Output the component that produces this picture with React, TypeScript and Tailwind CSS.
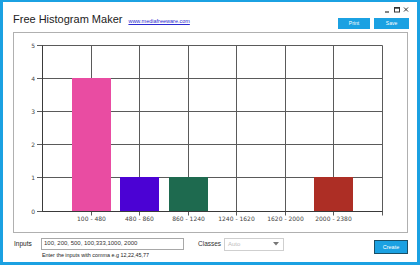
import React from 'react';

const bars = [
  { label: '100 - 480', value: 4, color: '#e94ca2' },
  { label: '480 - 860', value: 1, color: '#4b02d4' },
  { label: '860 - 1240', value: 1, color: '#1e6a4f' },
  { label: '1240 - 1620', value: 0, color: '#000' },
  { label: '1620 - 2000', value: 0, color: '#000' },
  { label: '2000 - 2380', value: 1, color: '#ad2e25' },
];

const Histogram: React.FC = () => {
  const left = 28;
  const right = 368;
  const top = 11.5;
  const bottom = 177.5;
  const step = (right - left) / 7;
  const unit = (bottom - top) / 5;
  const xs = [0, 1, 2, 3, 4, 5, 6, 7].map(i => Math.round(left + step * i) + 0.5);
  const ys = [0, 1, 2, 3, 4, 5].map(v => Math.round(bottom - unit * v) + 0.5);

  return (
    <svg width="393" height="199" className="block">
      {/* grid */}
      {ys.map((y, i) => (
        <line key={'h' + i} x1={left - 5} x2={xs[7]} y1={y} y2={y} stroke="#5a5a5a" strokeWidth="1" />
      ))}
      {xs.map((x, i) => (
        <line key={'v' + i} x1={x} x2={x} y1={ys[5]} y2={i === 0 ? ys[0] : ys[0] + 4} stroke="#5a5a5a" strokeWidth="1" />
      ))}
      {/* bars */}
      {bars.map((b, i) =>
        b.value > 0 ? (
          <rect
            key={'b' + i}
            x={xs[i + 1] - 19.5}
            y={ys[b.value] - 0.5}
            width={39}
            height={ys[0] - ys[b.value] + 0.5}
            fill={b.color}
          />
        ) : null
      )}
      <line x1={xs[0]} x2={xs[7]} y1={ys[0]} y2={ys[0]} stroke="#3a3a3a" />
      <line x1={xs[0]} x2={xs[0]} y1={ys[5]} y2={ys[0]} stroke="#3a3a3a" />
      {/* labels */}
      {ys.map((y, i) => (
        <text key={'yl' + i} x={21} y={y + 2.2} textAnchor="end" fontSize="6" fill="#444" fontFamily="'DejaVu Sans', sans-serif">
          {i}
        </text>
      ))}
      {bars.map((b, i) => (
        <text key={'xl' + i} x={xs[i + 1]} y={187.5} textAnchor="middle" fontSize="6" fill="#444" fontFamily="'DejaVu Sans', sans-serif">
          {b.label}
        </text>
      ))}
    </svg>
  );
};

const App: React.FC = () => {
  return (
    <div className="w-[420px] h-[265px] bg-white border-x-[3px] border-b-[3px] border-t-2 border-[#1ba1e2] flex flex-col font-['Liberation_Sans',Arial,sans-serif] overflow-hidden">
      {/* header */}
      <div className="h-[30px] flex items-start">
        <div className="pl-[10px] pt-[10px] flex items-baseline">
          <span className="text-[11px] leading-[14px] text-[#222]">Free Histogram Maker</span>
          <a className="ml-[6px] text-[5.5px] leading-[8px] text-[#2a2ad0] underline">www.mediafreeware.com</a>
        </div>
        <div className="ml-auto pr-[8px] flex flex-col items-end">
          <div className="h-[15.5px] flex items-start pt-[3px] pr-[0px]">
            <svg width="30" height="8" viewBox="0 0 30 8">
              <line x1="6" x2="10" y1="7" y2="7" stroke="#333" strokeWidth="1.2" />
              <rect x="15.5" y="2.5" width="5" height="4.5" fill="none" stroke="#333" strokeWidth="1" />
              <rect x="15.5" y="2.5" width="5" height="1.2" fill="#333" />
              <path d="M25 2.5 L29 6.5 M29 2.5 L25 6.5" stroke="#333" strokeWidth="1" />
            </svg>
          </div>
          <div className="flex gap-[4px]">
            <button className="w-[32px] h-[11.5px] bg-[#1ba1e2] text-white text-[5px] leading-[11.5px]">Print</button>
            <button className="w-[35px] h-[11.5px] bg-[#1ba1e2] text-white text-[5px] leading-[11.5px]">Save</button>
          </div>
        </div>
      </div>

      {/* chart */}
      <div className="ml-[10px] w-[395px] h-[201px] border border-[#b0b0b0]">
        <Histogram />
      </div>

      {/* inputs */}
      <div className="flex items-start pl-[11px] pr-[9px] pt-[4.5px]">
        <div className="flex flex-col">
          <div className="flex items-center">
            <span className="w-[27px] text-[6.5px] text-[#222]">Inputs</span>
            <div className="w-[143px] h-[12px] border border-[#a8a8a8] flex items-center pl-[2px] text-[6px] text-[#333]">
              100, 200, 500, 100,333,1000, 2000
            </div>
          </div>
          <span className="ml-[28px] mt-[2px] text-[5.4px] leading-[7px] text-[#222]">Enter the inputs with comma e.g 12,22,45,77</span>
        </div>
        <div className="ml-[14px] flex items-center">
          <span className="w-[26px] text-[6.5px] text-[#333]">Classes</span>
          <div className="w-[60px] h-[13px] border border-[#cfcfcf] flex items-center pl-[3px] pr-[4px] text-[6px] text-[#bdbdbd]">
            <span>Auto</span>
            <svg className="ml-auto" width="6" height="4" viewBox="0 0 6 4">
              <path d="M0 0 L6 0 L3 3.5 Z" fill="#777" />
            </svg>
          </div>
        </div>
        <button className="ml-auto mt-[2.5px] w-[34px] h-[14px] bg-[#1ba1e2] border border-[#1a4f66] text-white text-[5.5px] leading-[12px]">
          Create
        </button>
      </div>
    </div>
  );
};

export default App;
